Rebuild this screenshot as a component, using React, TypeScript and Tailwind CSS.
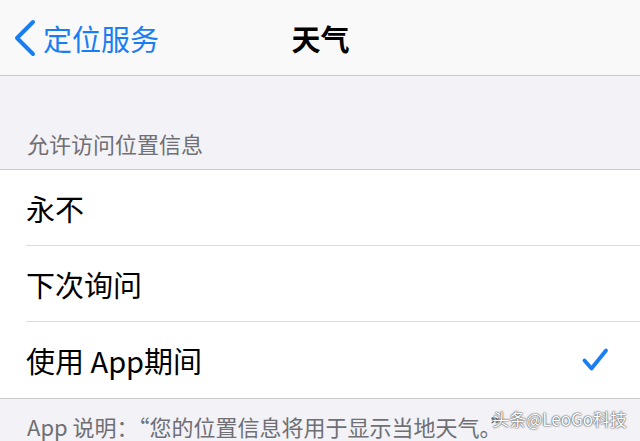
const font = "font-['Noto_Sans_CJK_SC','Noto_Sans',sans-serif]"

const options = [
    { label: "永不", checked: false },
    { label: "下次询问", checked: false },
    { label: "使用 App期间", checked: true },
]

const CheckIcon = () => (
    <svg width="28" height="26" viewBox="0 0 28 26" fill="none">
        <path
            d="M3.5 13.5 L10.5 21.5 L25 3.5"
            stroke="#1a7ef3"
            strokeWidth="3.8"
            strokeLinecap="round"
            strokeLinejoin="round"
        />
    </svg>
)

const BackChevron = () => (
    <svg width="24" height="38" viewBox="0 0 24 38" fill="none">
        <path
            d="M20 3 L4 19 L20 35"
            stroke="#1a7ef3"
            strokeWidth="4"
            strokeLinecap="round"
            strokeLinejoin="round"
        />
    </svg>
)

export default function App() {
    return (
        <div className={`w-[640px] h-[441px] overflow-hidden bg-[#f2f2f7] ${font}`}>
            {/* nav bar */}
            <header className="relative h-[76px] bg-[#f9f9f9] border-b border-[#c9c9cc] flex items-center">
                <div className="flex items-center pl-[13px] gap-[6px] text-[#1a7ef3] text-[29px] leading-[36px]">
                    <BackChevron />
                    <span>定位服务</span>
                </div>
                <div className="absolute inset-x-0 top-0 h-[75px] flex items-center justify-center pointer-events-none">
                    <span className="text-[29px] leading-[36px] font-semibold text-black pl-[1px]">天气</span>
                </div>
            </header>

            {/* section header */}
            <div className="h-[93px] flex items-end px-[27px] pb-[13px]">
                <span className="text-[22px] leading-[26px] text-[#6f6f74]">允许访问位置信息</span>
            </div>

            {/* options */}
            <section className="bg-white border-y border-[#c9c9cc]">
                {options.map((opt, i) => (
                    <div key={opt.label} className="pl-[26px]">
                        <div
                            className={`h-[76px] flex items-center justify-between pr-[31px] ${i < options.length - 1 ? "border-b border-[#dcdcdf]" : ""}`}
                        >
                            <span className="text-[29px] leading-[36px] text-black">{opt.label}</span>
                            {opt.checked && <CheckIcon />}
                        </div>
                    </div>
                ))}
            </section>

            {/* footer */}
            <div className="relative px-[27px] pt-[14px]">
                <p className="text-[22px] leading-[26px] text-[#6f6f74] whitespace-nowrap">
                    App 说明：“您的位置信息将用于显示当地天气。”
                </p>
                <span className="absolute right-[13px] top-[10px] text-[17px] leading-[20px] text-white [text-shadow:0_0_2px_rgba(0,0,0,0.75),0_0_1px_rgba(0,0,0,0.6)]">
                    头条@LeoGo科技
                </span>
            </div>
        </div>
    )
}
